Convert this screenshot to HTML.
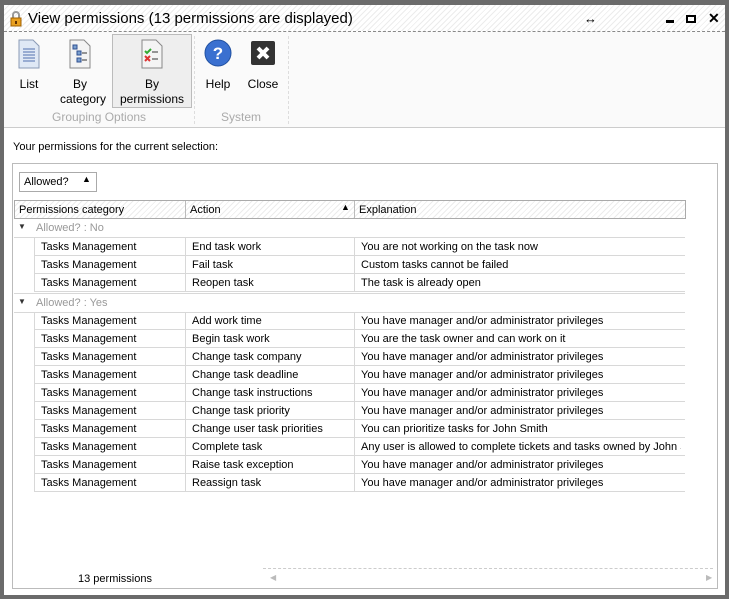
<!DOCTYPE html><html><head><style>
body{margin:0;width:729px;height:599px;background:#6b6b6b;font-family:"Liberation Sans",sans-serif;font-size:11px;color:#000;position:relative;overflow:hidden}
.win{position:absolute;left:4px;top:5px;width:721px;height:590px;background:#fff}
.hatch{background:repeating-linear-gradient(135deg,#fff 0 3px,#ececec 3px 4px)}
.title{position:absolute;left:0;top:0;width:721px;height:26px;border-bottom:1px dashed #888}
.title span{position:absolute;left:24px;top:5px;font-size:15px}
.tb{position:absolute;left:0;top:27px;width:721px;height:95px;border-bottom:1px solid #ccc;background:#fafafa}
.btn{position:absolute;top:6px;text-align:center;font-size:12px;line-height:15px}
.grp{position:absolute;top:78px;color:#aaa;font-size:12px}
.a{position:absolute}
.panel{position:absolute;left:8px;top:158px;width:704px;height:424px;border:1px solid #bbb}
.row{position:absolute;left:21px;width:650px;height:17px;border-bottom:1px solid #d8d8d8;border-left:1px solid #d8d8d8}
.row div{position:absolute;top:3px}
.c1{left:6px}.c2{left:157px}.c3{left:326px;white-space:nowrap;width:320px;overflow:hidden}
.row .v1{position:absolute;left:150px;top:0;height:17px;border-left:1px solid #d8d8d8}
.row .v2{position:absolute;left:319px;top:0;height:17px;border-left:1px solid #d8d8d8}
.gh{position:absolute;left:9px;color:#999}
</style></head><body>
<div class="win">
<div class="title hatch">
<svg class="a" style="left:4px;top:6px" width="16" height="16"><path d="M5 7V4a3 3 0 0 1 6 0v3" stroke="#999" stroke-width="2" fill="none"/><rect x="3" y="7" width="10" height="8" fill="#e8a020" stroke="#a06000"/><rect x="7" y="10" width="2" height="3" fill="#603000"/></svg>
<span>View permissions (13 permissions are displayed)</span>
<div class="a" style="left:580px;top:6px;font-size:13px;font-weight:bold">↔</div>
<div class="a" style="left:662px;top:15px;width:8px;height:3px;background:#000"></div>
<div class="a" style="left:682px;top:10px;width:6px;height:4px;border:2px solid #000"></div>
<div class="a" style="left:704px;top:5px;font-size:14px;font-weight:bold">✕</div>
</div>
<div class="tb hatch">
<div class="a" style="left:108px;top:2px;width:78px;height:72px;border:1px solid #bbb;background:#eee"></div>
<div class="btn" style="left:8px;width:34px">
<svg width="26" height="32"><path d="M3 2h14l6 6v22H3z" fill="#dfe8f5" stroke="#8a9ab5"/><g stroke="#5070b0"><path d="M7 11h12M7 14h12M7 17h12M7 20h12M7 23h12"/></g></svg><br><span style="position:relative;top:3px">List</span></div>
<div class="btn" style="left:56px;width:40px">
<svg width="26" height="32"><path d="M3 2h14l6 6v22H3z" fill="#f4f4f4" stroke="#888"/><g fill="#7aa0d0" stroke="#305090"><rect x="6" y="7" width="4" height="4"/><rect x="10" y="13" width="4" height="4"/><rect x="10" y="20" width="4" height="4"/></g><path d="M15 15h5M15 22h5" stroke="#333"/></svg><br><span style="position:relative;top:3px">By<br>category</span></div>
<div class="btn" style="left:114px;width:68px">
<svg width="26" height="32"><path d="M3 2h14l6 6v22H3z" fill="#f4f4f4" stroke="#888"/><path d="M6 13l2 2 4-4" stroke="#3a3" stroke-width="2" fill="none"/><path d="M6 18l5 5M11 18l-5 5" stroke="#d33" stroke-width="2"/><path d="M13 14h6M13 21h6" stroke="#333"/></svg><br><span style="position:relative;top:3px">By<br>permissions</span></div>
<div class="btn" style="left:198px;width:32px">
<svg width="30" height="30"><circle cx="15" cy="15" r="13" fill="#3a70d0" stroke="#2050a0"/><text x="15" y="21" font-size="17" font-weight="bold" fill="#fff" text-anchor="middle" font-family="Liberation Sans">?</text></svg><br><span style="position:relative;top:5px">Help</span></div>
<div class="btn" style="left:242px;width:34px">
<svg width="26" height="30"><rect x="1" y="3" width="24" height="24" rx="2" fill="#333"/><path d="M8 10l10 10M18 10l-10 10" stroke="#fff" stroke-width="4"/></svg><br><span style="position:relative;top:5px">Close</span></div>
<div class="grp" style="left:48px">Grouping Options</div>
<div class="grp" style="left:217px">System</div>
<div class="a" style="left:190px;top:4px;height:88px;border-left:1px dashed #ddd"></div>
<div class="a" style="left:284px;top:4px;height:88px;border-left:1px dashed #ddd"></div>
</div>
<div class="a" style="left:9px;top:136px;font-size:11px">Your permissions for the current selection:</div>
<div class="panel">
<div class="a" style="left:6px;top:8px;width:76px;height:18px;border:1px solid #aaa"><span class="a" style="left:4px;top:3px">Allowed?</span><span class="a" style="left:62px;top:1px;font-size:9px">▲</span></div>
<div class="a hatch" style="left:1px;top:36px;width:670px;height:17px;border:1px solid #aaa">
<span class="a" style="left:4px;top:3px">Permissions category</span>
<span class="a" style="left:170px;top:0;height:17px;border-left:1px solid #bbb"></span>
<span class="a" style="left:175px;top:3px">Action</span>
<span class="a" style="left:326px;top:1px;font-size:9px">▲</span>
<span class="a" style="left:339px;top:0;height:17px;border-left:1px solid #bbb"></span>
<span class="a" style="left:344px;top:3px">Explanation</span>
</div>
<div class="a" style="left:1px;top:55px;width:671px;height:18px;border-bottom:1px solid #d8d8d8"><span class="gh" style="left:4px;top:3px;font-size:8px;color:#333">▼</span><span class="gh" style="left:22px;top:3px">Allowed? : No</span></div>
<div class="a" style="left:1px;top:129px;width:671px;height:18px;border-bottom:1px solid #d8d8d8;border-top:1px solid #d8d8d8"><span class="gh" style="left:4px;top:3px;font-size:8px;color:#333">▼</span><span class="gh" style="left:22px;top:3px">Allowed? : Yes</span></div>
<div id="rows"></div>
</div>
<div class="a" style="left:259px;top:563px;width:450px;border-top:1px dashed #ccc"></div>
<div class="a" style="left:74px;top:568px">13 permissions</div>
<div class="a" style="left:266px;top:568px;color:#bbb;font-size:8px">◀</div>
<div class="a" style="left:702px;top:568px;color:#bbb;font-size:8px">▶</div>
</div>
<script>
var d=[["End task work","You are not working on the task now"],["Fail task","Custom tasks cannot be failed"],["Reopen task","The task is already open"],
["Add work time","M"],["Begin task work","You are the task owner and can work on it"],["Change task company","M"],["Change task deadline","M"],["Change task instructions","M"],["Change task priority","M"],["Change user task priorities","You can prioritize tasks for John Smith"],["Complete task","Any user is allowed to complete tickets and tasks owned by John Smith"],["Raise task exception","M"],["Reassign task","M"]];
var h="";d.forEach(function(r,i){var t=i<3?74+i*18:148+(i-3)*18;var e=r[1]=="M"?"You have manager and/or administrator privileges":r[1];
h+='<div class="row" style="top:'+t+'px"><div class="c1">Tasks Management</div><span class="v1"></span><div class="c2">'+r[0]+'</div><span class="v2"></span><div class="c3">'+e+'</div></div>';});
document.getElementById("rows").innerHTML=h;
</script>
</body></html>
